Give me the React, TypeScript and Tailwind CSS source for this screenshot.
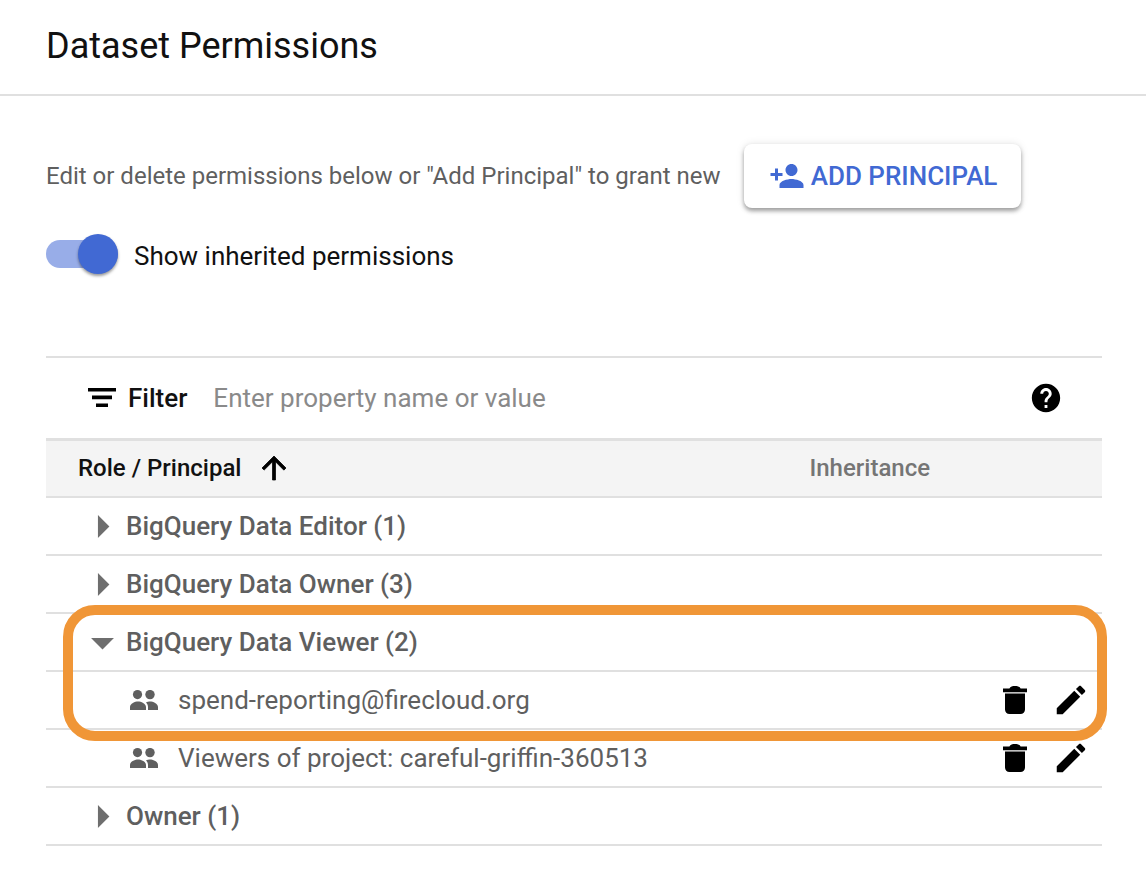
import React from "react";

const font = { fontFamily: "Roboto, sans-serif" };

function Icon({ d, className, thick }: { d: string; className: string; thick?: boolean }) {
  return (
    <svg viewBox="0 0 24 24" fill="currentColor" stroke={thick ? "currentColor" : undefined} strokeWidth={thick ? 0.5 : undefined} className={className}>
      <path d={d} />
    </svg>
  );
}

const P = {
  add: "M15 12c2.21 0 4-1.79 4-4s-1.79-4-4-4-4 1.79-4 4 1.79 4 4 4zm-9-2V7H4v3H1v2h3v3h2v-3h3v-2H6zm9 4c-2.67 0-8 1.34-8 4v2h16v-2c0-2.66-5.33-4-8-4z",
  up: "M4 12l1.41 1.41L11 7.83V20h2V7.83l5.58 5.59L20 12l-8-8-8 8z",
  help: "M12 2C6.48 2 2 6.48 2 12s4.48 10 10 10 10-4.48 10-10S17.52 2 12 2zm1 17h-2v-2h2v2zm2.07-7.75l-.9.92C13.45 12.9 13 13.5 13 15h-2v-.5c0-1.1.45-2.1 1.17-2.83l1.24-1.26c.37-.36.59-.86.59-1.41 0-1.1-.9-2-2-2s-2 .9-2 2H8c0-2.21 1.79-4 4-4s4 1.79 4 4c0 .88-.36 1.68-.93 2.25z",
  edit: "M3 17.25V21h3.75L17.81 9.94l-3.75-3.75L3 17.25zM20.71 7.04c.39-.39.39-1.02 0-1.41l-2.34-2.34c-.39-.39-1.02-.39-1.41 0l-1.83 1.83 3.75 3.75 1.83-1.83z",
  right: "M10 17l5-5-5-5v10z",
  down: "M7 10l5 5 5-5H7z",
};

function FilterIcon() {
  return (
    <svg viewBox="0 0 28 20" fill="currentColor" className="ml-[42px] h-[20px] w-[28px] shrink-0 text-black">
      <path d="M0 0h28v3.5H0zM4 7.6h20v3.6H4zM8 15.4h12V19H8z" />
    </svg>
  );
}

function PeopleIcon() {
  return (
    <svg viewBox="0 0 28 20" fill="currentColor" className="ml-[84px] h-[20px] w-[28px] shrink-0 text-[#5f5f5f]">
      <circle cx="7.5" cy="4.6" r="4.6" />
      <circle cx="20" cy="4.6" r="4.7" />
      <path d="M0 20v-3c0-3.5 5-5.5 8-5.5s8 2 8 5.5v3zM18 20v-3c0-2-.8-3.5-2-4.6 1-.6 3-.9 4-.9 3 0 8 2 8 5.5v3z" />
    </svg>
  );
}

function TrashIcon() {
  return (
    <svg viewBox="0 0 24 28" fill="currentColor" className="h-[28px] w-[24px]">
      <path d="M0 2.4h6.4C7.4.6 9.500 0 12 0s4.600.6 5.600 2.400H24v3.800H0zM2 7.400h20V23.500c0 2.600-1.900 4.500-4.500 4.500h-11C3.900 28 2 26.100 2 23.500z" />
    </svg>
  );
}

function RoleRow({ label, open }: { label: string; open?: boolean }) {
  return (
    <div className="flex h-[58px] items-center border-b-2 border-[#e0e0e0]">
      <div className="ml-[29px] flex w-[51px] shrink-0 items-center">
        <Icon d={open ? P.down : P.right} className="h-[55px] w-[55px] shrink-0 text-[#6e6e6e]" />
      </div>
      <span className="text-[26px] font-medium text-[#5f5f5f]">{label}</span>
    </div>
  );
}

function MemberRow({ label }: { label: string }) {
  return (
    <div className="flex h-[58px] items-center border-b-2 border-[#e0e0e0]">
      <PeopleIcon />
      <span className="ml-[20px] text-[26px] text-[#5f5f5f]">{label}</span>
      <div className="ml-auto mr-[12px] flex items-center gap-[25px] text-black">
        <TrashIcon />
        <Icon d={P.edit} className="h-[38px] w-[38px]" />
      </div>
    </div>
  );
}

export default function App() {
  return (
    <div style={font} className="relative h-[870px] w-[1146px] overflow-hidden bg-white">
      <header className="flex h-[96px] items-center border-b-2 border-[#e0e0e0] pl-[46px] pb-[2px]">
        <h1 className="text-[36px] font-normal text-[#111111]">Dataset Permissions</h1>
      </header>

      <section className="pl-[46px] pr-[44px]">
        <div className="mt-[48px] flex items-center">
          <span className="text-[24px] text-[#5f5f5f]">Edit or delete permissions below or "Add Principal" to grant new</span>
          <button className="ml-[23px] flex h-[64px] w-[277px] items-center justify-center gap-[6px] rounded-[8px] bg-white pl-[2px] text-[26px] font-medium text-[#4169d3] shadow-[0_3px_4px_rgba(0,0,0,0.35),0_0_8px_rgba(0,0,0,0.1)]">
            <Icon d={P.add} className="h-[36px] w-[36px]" />
            ADD PRINCIPAL
          </button>
        </div>

        <div className="mt-[29px] flex items-center">
          <div className="relative -mt-[6px] h-[28px] w-[72px] rounded-full bg-[#98ade8]">
            <div className="absolute right-0 top-[-6px] h-[40px] w-[40px] rounded-full bg-[#4169d3] shadow-[0_2px_3px_rgba(0,0,0,0.4)]" />
          </div>
          <span className="ml-[16px] text-[26px] text-[#111111]">Show inherited permissions</span>
        </div>

        <div className="mt-[80px] border-t-2 border-[#e0e0e0]">
          <div className="flex h-[83px] items-center border-b-[3px] border-[#e0e0e0]">
            <FilterIcon />
            <span className="ml-[12px] text-[26px] font-medium text-[#111111]">Filter</span>
            <span className="ml-[26px] text-[26px] text-[#8a8a8a]">Enter property name or value</span>
            <Icon d={P.help} className="ml-auto mr-[39px] h-[34px] w-[34px] text-black" />
          </div>
          <div className="flex h-[57px] items-center border-b-2 border-[#e0e0e0] bg-[#f4f4f4] pb-[2px]">
            <span className="ml-[32px] text-[24px] font-medium text-[#111111]">Role / Principal</span>
            <Icon d={P.up} thick className="ml-[15px] h-[36px] w-[36px] text-black" />
            <span className="ml-[517px] text-[24px] font-medium text-[#757575]">Inheritance</span>
          </div>
          <RoleRow label="BigQuery Data Editor (1)" />
          <RoleRow label="BigQuery Data Owner (3)" />
          <RoleRow label="BigQuery Data Viewer (2)" open />
          <MemberRow label="spend-reporting@firecloud.org" />
          <MemberRow label="Viewers of project: careful-griffin-360513" />
          <RoleRow label="Owner (1)" />
        </div>
      </section>

      <div className="pointer-events-none absolute left-[63px] top-[605px] h-[136px] w-[1044px] rounded-[32px] border-[10px] border-[#f09637]" />
    </div>
  );
}
